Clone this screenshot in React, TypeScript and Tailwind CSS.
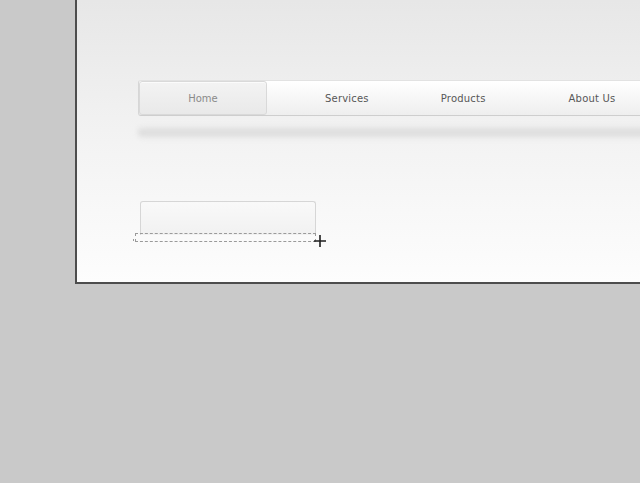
const font = { fontFamily: '"DejaVu Sans", Verdana, sans-serif' };

const links = [
    { label: "Services", ml: "ml-[58px]" },
    { label: "Products", ml: "ml-[72px]" },
    { label: "About Us", ml: "ml-[83px]" },
];

function Crosshair() {
    return (
        <svg className="absolute left-[173px] top-[33px] h-[14px] w-[14px]" viewBox="0 0 14 14">
            <path d="M7 1v12M1 7h12" stroke="#1f1f1f" strokeWidth="1.6" />
        </svg>
    );
}

export default function App() {
    return (
        <div className="h-[483px] w-[640px] overflow-hidden bg-[#c9c9c9]" style={font}>
            <div className="ml-[75px] flex h-[284px] w-[620px] flex-col border-b-2 border-l-2 border-[#4d4d4d] bg-gradient-to-b from-[#e7e7e7] via-[#f3f3f3] to-[#fdfdfd] pl-[61px] pt-[80px]">
                <nav className="flex h-[36px] w-[520px] items-stretch rounded-l-[3px] border-y border-l border-t-[#e2e2e2] border-b-[#cecece] border-l-[#d6d6d6] bg-gradient-to-b from-white to-[#eeeeee]">
                    <div className="flex w-[128px] items-center justify-center rounded-[3px] border border-[#d9d9d9] bg-gradient-to-b from-[#f3f3f3] to-[#e9e9e9] text-[10px] text-[#8a8a8a] shadow-[inset_0_1px_0_#fbfbfb]">
                        Home
                    </div>
                    {links.map((link) => (
                        <span key={link.label} className={`${link.ml} flex items-center text-[10px] tracking-[0.2px] text-[#575757]`}>
                            {link.label}
                        </span>
                    ))}
                </nav>

                <div className="mt-[9px] h-[15px] w-[520px] rounded-l-full bg-gradient-to-b from-transparent via-[#d9d9d9] to-transparent blur-[2.5px]" />

                <div className="relative ml-[2px] mt-[61px] w-[176px]">
                    <div className="h-[34px] rounded-t-[3px] border border-b-0 border-[#d6d6d6] bg-gradient-to-b from-[#f9f9f9] to-[#f1f1f1]" />
                    <div className="absolute left-[-5px] top-[32px] h-[9px] w-[181px] border border-dashed border-[#9a9a9a]" />
                    <div className="absolute left-[-7px] top-[38px] h-[2px] w-[1px] bg-[#9a9a9a]" />
                    <Crosshair />
                </div>
            </div>
        </div>
    );
}
